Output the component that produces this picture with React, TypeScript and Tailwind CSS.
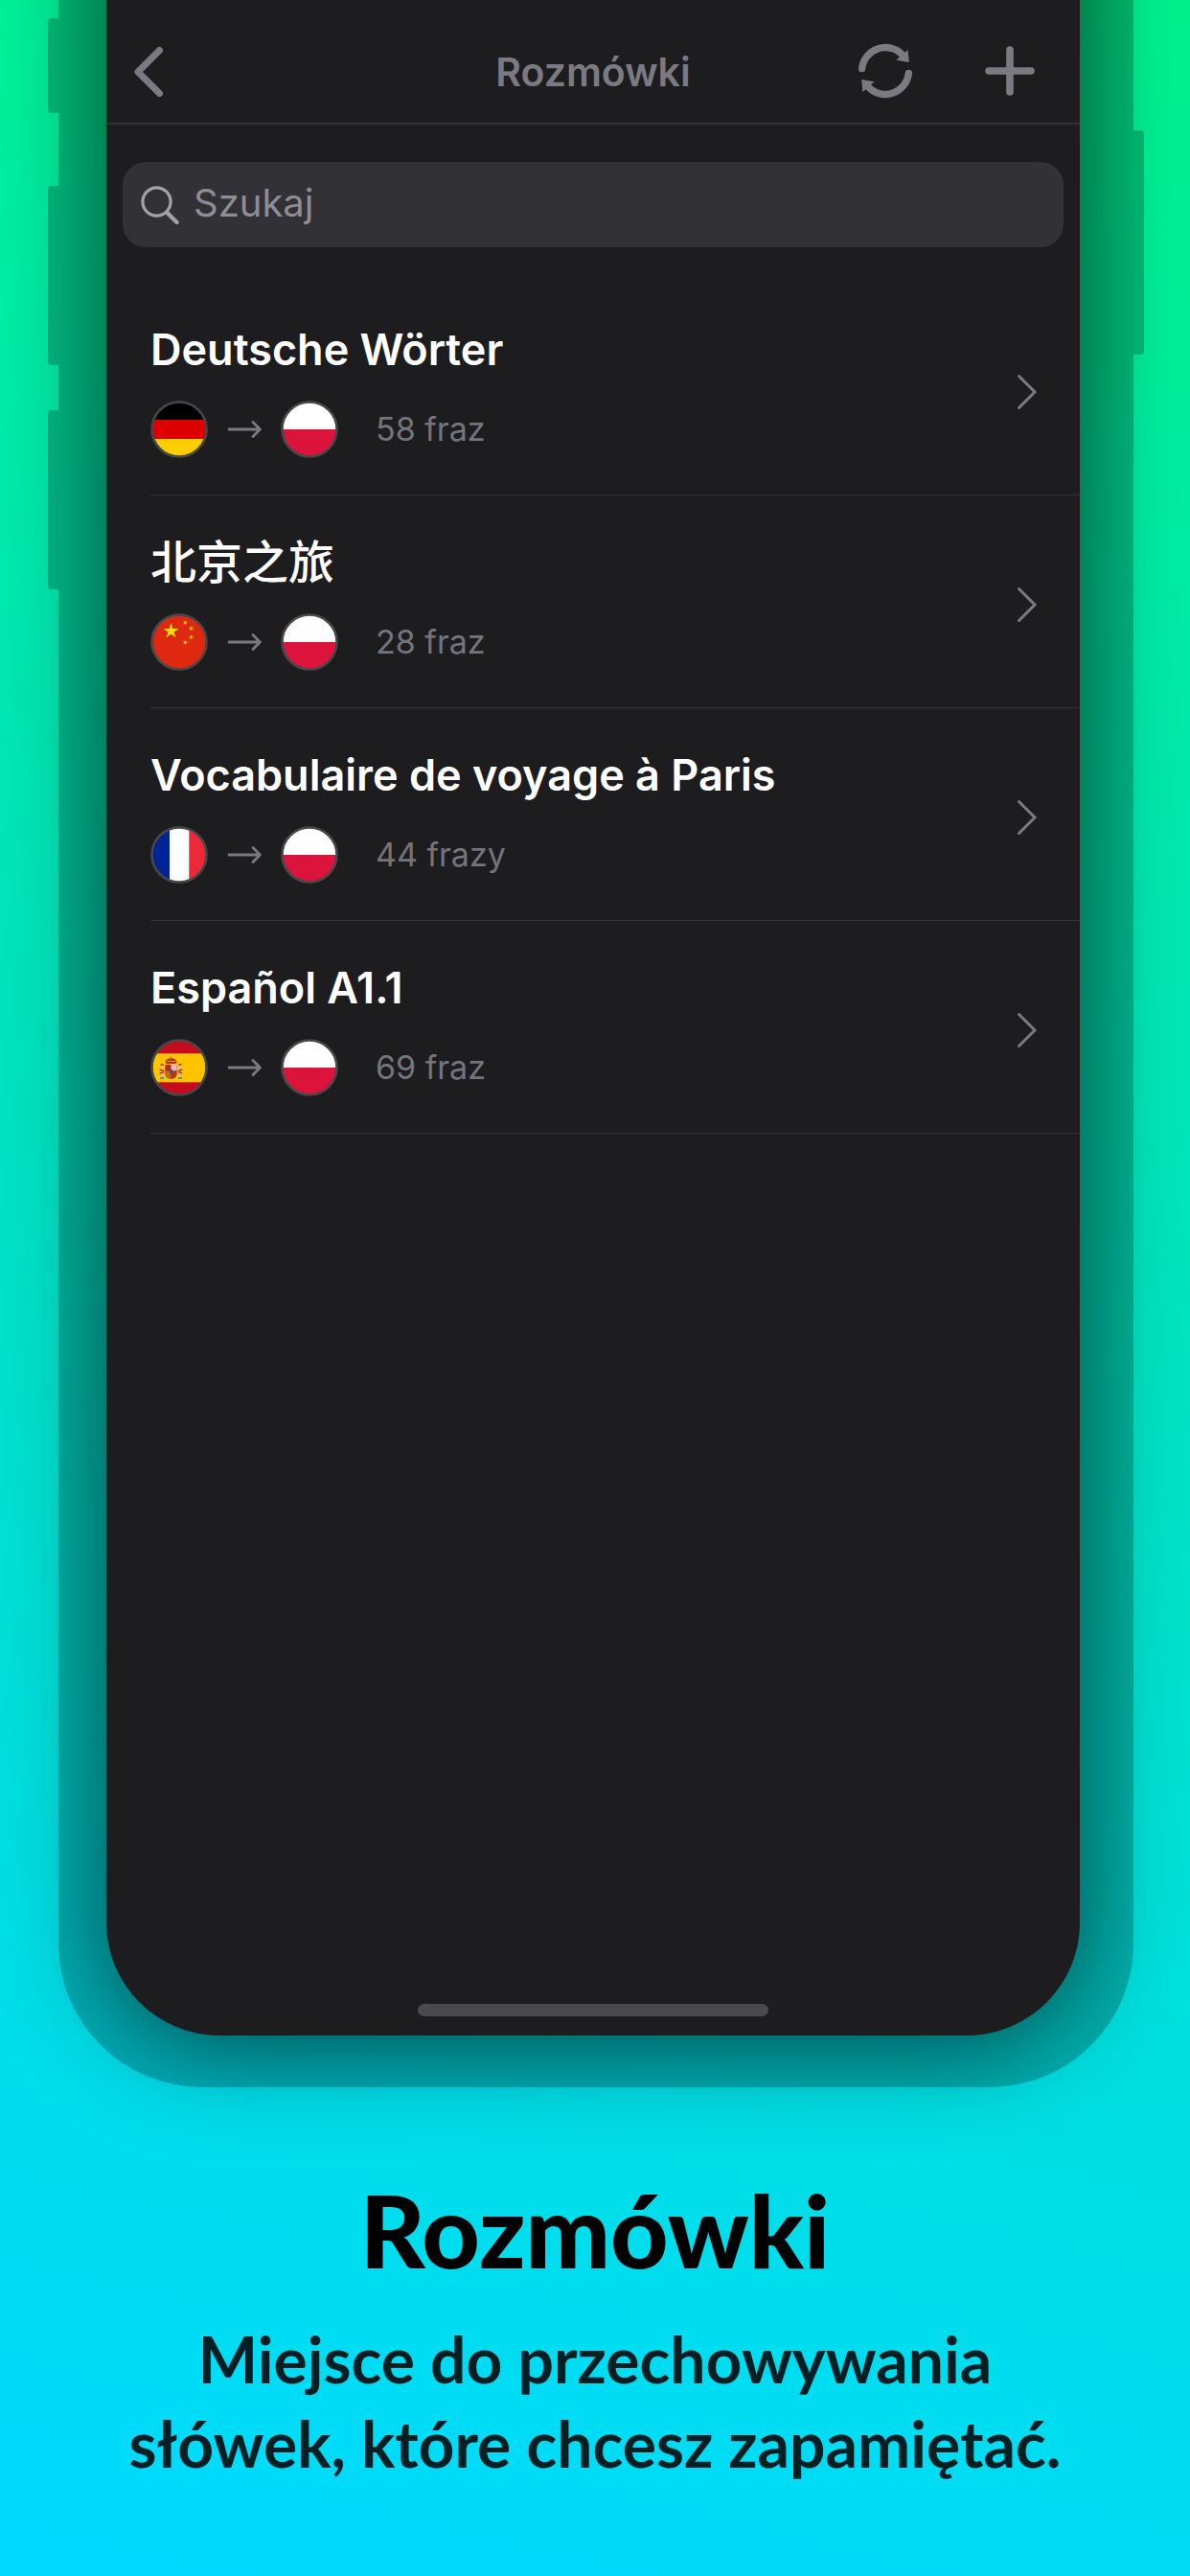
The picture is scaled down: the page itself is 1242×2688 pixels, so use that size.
import React from "react";

type Country = "de" | "cn" | "fr" | "es" | "pl";

interface Phrasebook {
  title: string;
  from: Country;
  to: Country;
  count: string;
  lang: string;
}

const phrasebooks: Phrasebook[] = [
  { title: "Deutsche Wörter", from: "de", to: "pl", count: "58 fraz", lang: "de" },
  { title: "北京之旅", from: "cn", to: "pl", count: "28 fraz", lang: "zh" },
  { title: "Vocabulaire de voyage à Paris", from: "fr", to: "pl", count: "44 frazy", lang: "fr" },
  { title: "Español A1.1", from: "es", to: "pl", count: "69 fraz", lang: "es" },
];

const countryNames: Record<Country, string> = {
  de: "niemiecki",
  cn: "chiński",
  fr: "francuski",
  es: "hiszpański",
  pl: "polski",
};

const STAR =
  "M0 -8.4 L1.9 -2.6 L8 -2.6 L3.1 1 L4.9 6.8 L0 3.2 L-4.9 6.8 L-3.1 1 L-8 -2.6 L-1.9 -2.6 Z";

function SpanishArms() {
  return (
    <g>
      <path d="M15.5 24 Q16 20.5 21.5 20.2 Q27 20.5 27.5 24 L26.3 26 H16.7 Z" fill="#b5301c" />
      <path d="M17 23.4 h9" stroke="#e9a21a" strokeWidth="1" />
      <path d="M21.5 18.4 v2" stroke="#8a6a1c" strokeWidth="1" />
      <path d="M15.4 27 H27.6 V36 Q27.6 41.6 21.5 41.8 Q15.4 41.6 15.4 36 Z" fill="#b2281f" />
      <path d="M21.5 27 H27.6 V33.6 H21.5 Z" fill="#e7b6c4" />
      <path d="M15.4 33.6 H21.5 V41.8 Q15.4 41.6 15.4 36 Z" fill="#c86a14" />
      <path d="M21.5 33.6 H27.6 V36 Q27.6 41.6 21.5 41.8 Z" fill="#a8411a" />
      <ellipse cx="21.5" cy="34" rx="1.8" ry="2.3" fill="#2e5a8c" />
      <rect x="11" y="28" width="2.2" height="12" fill="#d9b9a0" />
      <rect x="29.8" y="28" width="2.2" height="12" fill="#d9b9a0" />
      <path d="M9.6 32 l4.6 1.6 M9.8 36 l4 -1.4 M33.4 32 l-4.6 1.6 M33.2 36 l-4 -1.4" stroke="#b5301c" strokeWidth="1.4" />
      <path d="M10.6 27 h3 M29.4 27 h3" stroke="#b5301c" strokeWidth="1.6" />
      <path d="M10 41 h4.2 M28.8 41 h4.2" stroke="#6f8f7a" strokeWidth="2" />
    </g>
  );
}

function Flag({ country }: { country: Country }) {
  const clip = React.useId();
  return (
    <svg viewBox="0 0 60 60" role="img" aria-label={countryNames[country]} className="size-[60px] shrink-0">
      <clipPath id={clip}>
        <circle cx="30" cy="30" r="28.5" />
      </clipPath>
      <g clipPath={`url(#${clip})`}>
        {country === "de" && (
          <>
            <rect width="60" height="20" fill="#000" />
            <rect y="20" width="60" height="20" fill="#dd0000" />
            <rect y="40" width="60" height="20" fill="#ffce00" />
          </>
        )}
        {country === "cn" && (
          <>
            <rect width="60" height="60" fill="#de2910" />
            <path d={STAR} fill="#ffde00" transform="translate(21.5 18.5)" />
            <path d={STAR} fill="#ffde00" transform="translate(36.3 9.7) rotate(20) scale(.32)" />
            <path d={STAR} fill="#ffde00" transform="translate(42.4 15.7) rotate(45) scale(.32)" />
            <path d={STAR} fill="#ffde00" transform="translate(42.4 24.7) rotate(70) scale(.32)" />
            <path d={STAR} fill="#ffde00" transform="translate(36.3 30.4) rotate(20) scale(.32)" />
          </>
        )}
        {country === "fr" && (
          <>
            <rect width="60" height="60" fill="#fff" />
            <rect width="20" height="60" fill="#002395" />
            <rect x="40.3" width="20" height="60" fill="#ed2939" />
          </>
        )}
        {country === "es" && (
          <>
            <rect width="60" height="60" fill="#c60b1e" />
            <rect y="15.3" width="60" height="30" fill="#ffc400" />
            <SpanishArms />
          </>
        )}
        {country === "pl" && (
          <>
            <rect width="60" height="30" fill="#fff" />
            <rect y="30" width="60" height="30" fill="#dc143c" />
          </>
        )}
      </g>
      <circle cx="30" cy="30" r="28.5" fill="none" stroke="#48474a" strokeWidth="2.6" />
    </svg>
  );
}

function ArrowIcon() {
  return (
    <svg viewBox="0 0 36 20" className="mx-5 h-[20px] w-[36px] shrink-0" fill="none" stroke="#7b7a83" strokeWidth="2.8" strokeLinecap="round" strokeLinejoin="round" aria-hidden="true">
      <path d="M2 10 H34 M27 2.5 L34.4 10 L27 17.5" />
    </svg>
  );
}

function PhrasebookRow({ book }: { book: Phrasebook }) {
  return (
    <li className="border-b border-[#343436]">
      <a href="#" className="flex items-center justify-between pt-[6px] pr-[43px]">
        <div className="pt-[34px] pb-[38px]">
          <h2
            lang={book.lang}
            className="text-[45px] leading-[60px] font-semibold whitespace-nowrap text-white [&:lang(zh)]:text-[48px] [&:lang(zh)]:font-medium"
          >
            {book.title}
          </h2>
          <div className="mt-[23px] flex items-center">
            <Flag country={book.from} />
            <ArrowIcon />
            <Flag country={book.to} />
            <span className="ml-[39px] text-[34px] leading-[40px] text-[#75747c]">{book.count}</span>
          </div>
        </div>
        <svg viewBox="0 0 24 38" className="h-[38px] w-[24px] shrink-0" fill="none" stroke="#7b7a83" strokeWidth="3" strokeLinecap="round" strokeLinejoin="miter" aria-hidden="true">
          <path d="M3.5 2.5 L20 19 L3.5 35.5" />
        </svg>
      </a>
    </li>
  );
}

function NavBar() {
  return (
    <header className="grid grid-cols-[1fr_auto_1fr] items-center border-b-2 border-[#313133] pt-5">
      <button type="button" aria-label="Wstecz" className="ml-[25px] flex h-[108px] w-[60px] items-center">
        <svg viewBox="0 0 36 54" className="h-[54px] w-[36px]" fill="none" stroke="#7b7a83" strokeWidth="7" strokeLinecap="round" strokeLinejoin="round" aria-hidden="true">
          <path d="M30.5 5.5 L8 28 L30.5 50.5" />
        </svg>
      </button>
      <h1 className="pt-[2px] text-[41px] leading-[50px] font-semibold text-[#7b7a83]">Rozmówki</h1>
      <div className="flex items-center justify-end gap-[72px] pr-[45px]">
        <button type="button" aria-label="Odśwież">
          <svg viewBox="0 0 60 60" className="size-[60px]" aria-hidden="true">
            <g fill="none" stroke="#7b7a83" strokeWidth="7.4" strokeLinecap="round">
              <path d="M5.6 27.6 A24.6 24.6 0 0 1 47.5 12.8" />
              <path d="M54.4 32.4 A24.6 24.6 0 0 1 12.5 47.2" />
            </g>
            <path d="M54.8 20.9 L53.6 8 L41.3 18.8 Z M5.2 39.1 L6.4 52 L18.7 41.2 Z" fill="#7b7a83" />
          </svg>
        </button>
        <button type="button" aria-label="Dodaj">
          <svg viewBox="0 0 60 60" className="-mx-[2px] size-[60px]" fill="none" stroke="#7b7a83" strokeWidth="7.6" strokeLinecap="round" aria-hidden="true">
            <path d="M30 8 V52 M8 30 H52" />
          </svg>
        </button>
      </div>
    </header>
  );
}

export default function App() {
  return (
    <div
      className="flex min-h-screen flex-col overflow-hidden bg-[linear-gradient(193deg,#00f18e_0%,#00e3c6_52%,#00dafe_98%)] font-['Inter','Noto_Sans_CJK_SC',sans-serif]"
    >
      <div className="relative mr-[59px] ml-[61px] flex flex-1 flex-col rounded-b-[150px] bg-black/22 pr-[56px] pb-[54px] pl-[50px]">
        <span className="absolute top-[19px] -left-[11px] h-[99px] w-[11px] rounded-l-[4px] bg-black/22" />
        <span className="absolute top-[194px] -left-[11px] h-[187px] w-[11px] rounded-l-[4px] bg-black/22" />
        <span className="absolute top-[428px] -left-[11px] h-[187px] w-[11px] rounded-l-[4px] bg-black/22" />
        <span className="absolute top-[136px] -right-[11px] h-[234px] w-[11px] rounded-r-[4px] bg-black/22" />

        <main className="-mt-[140px] flex flex-1 flex-col rounded-b-[118px] bg-[#1d1d1f] pt-[140px] shadow-[0_10px_100px_rgba(0,0,0,0.57)]">
          <NavBar />
          <label htmlFor="search" className="mx-[17px] mt-[39px] flex h-[89px] items-center rounded-[24px] bg-[#323136] pl-[19px]">
            <svg viewBox="0 0 40 42" className="h-[42px] w-[40px] shrink-0" fill="none" stroke="#a3a2a9" strokeWidth="3.2" strokeLinecap="round" aria-hidden="true">
              <circle cx="16.5" cy="17.5" r="14.6" />
              <path d="M27 28.5 L37.5 39" strokeWidth="4.4" />
            </svg>
            <input
              id="search"
              type="text"
              aria-label="Szukaj"
              placeholder="Szukaj"
              className="ml-[15px] min-w-0 flex-1 bg-transparent pb-[4px] text-[40px] leading-[52px] text-white outline-none placeholder:text-[#8e8d94]"
            />
          </label>
          <ul className="mt-[37px] pl-[46px]">
            {phrasebooks.map((book) => (
              <PhrasebookRow key={book.title} book={book} />
            ))}
          </ul>
          <div className="mx-auto mt-auto mb-[20px] h-[13px] w-[366px] rounded-full bg-[#4a4a4a]" />
        </main>
      </div>

      <section className="px-10 pt-[84px] pb-[94px] text-center font-['Lato',sans-serif]">
        <h2 className="text-[105px] leading-[128px] font-black text-black">Rozmówki</h2>
        <p className="mt-[28px] text-[66px] leading-[88px] font-bold text-[#021f24]">
          Miejsce do przechowywania
          <br />
          słówek, które chcesz zapamiętać.
        </p>
      </section>
    </div>
  );
}
